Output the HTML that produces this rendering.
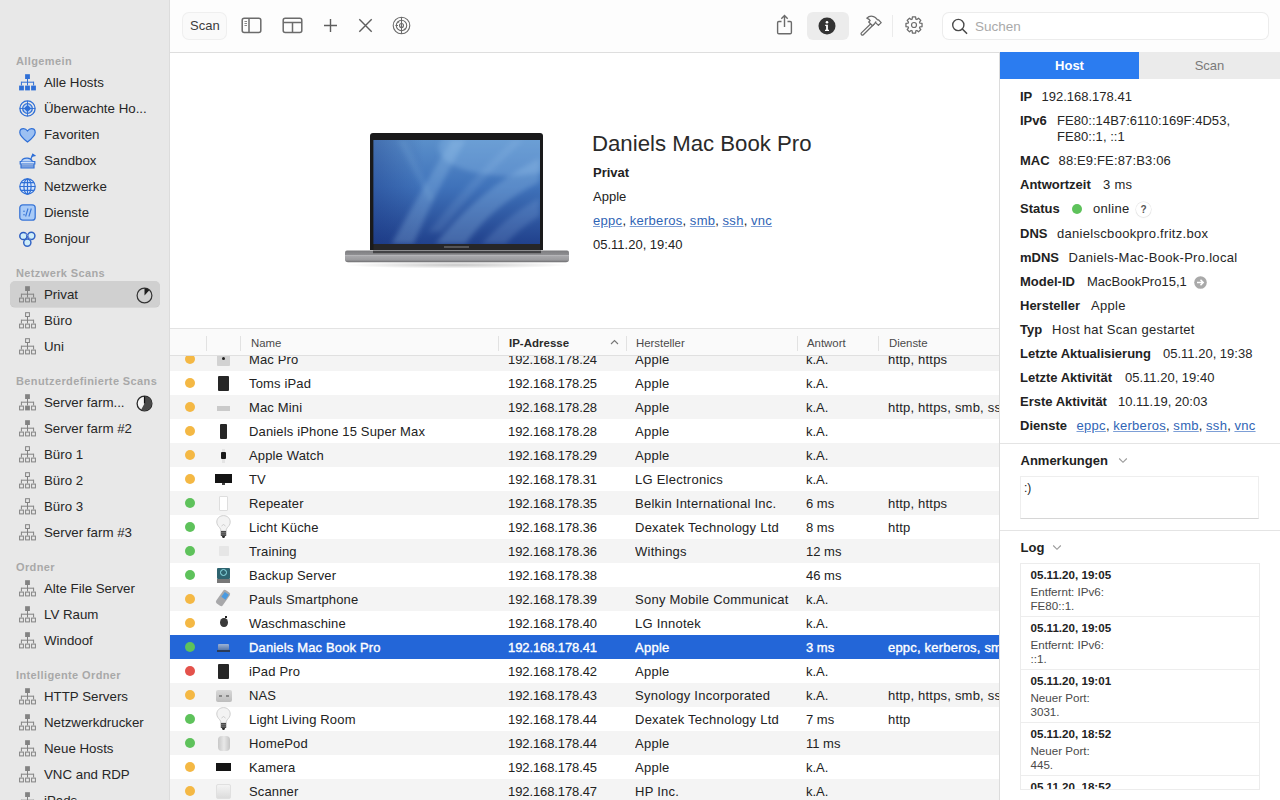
<!DOCTYPE html><html><head><meta charset="utf-8"><style>
*{margin:0;padding:0;box-sizing:border-box}
html,body{width:1280px;height:800px;overflow:hidden;background:#fff;font-family:"Liberation Sans",sans-serif;color:#222;font-size:13px}
.a{position:absolute;white-space:nowrap}
#sb{position:absolute;left:0;top:0;width:170px;height:800px;background:#e8e8e8;border-right:1px solid #dcdcdc;overflow:hidden}
.sh{position:absolute;left:16px;font-size:11px;font-weight:bold;color:#a8a8a8;line-height:14px;white-space:nowrap;letter-spacing:0.38px}
.si{position:absolute;left:10px;width:150px;height:26px;line-height:27px;white-space:nowrap;font-size:13.3px}
.si .t{position:absolute;left:34px;top:0;color:#262626}
.si .ic{position:absolute;left:9px;top:4px;width:17px;height:17px}
.si .pr{position:absolute;left:126px;top:5px}
.si.sel{background:#d0d0d0;border-radius:5px;height:25.5px;box-shadow:0 0.6px 0 #c8c8c8}
#tb{position:absolute;left:170px;top:0;width:1110px;height:53px;background:#fdfdfd;border-bottom:1px solid #dedede}
</style></head><body>
<div id="sb">
<div class="sh" style="top:54px">Allgemein</div>
<div class="si" style="top:69px"><div class="ic"><svg width="17" height="17" viewBox="0 0 17 17"><rect x="6.1" y="0.2" width="4.8" height="4.8" fill="#2f6fd6"/><path d="M8.5 5V11.4M2.4 8.2H14.6M2.4 7.7V11.4M14.6 7.7V11.4" stroke="#2f6fd6" stroke-width="1.0" fill="none"/><rect x="0.1" y="11.6" width="4.8" height="4.8" fill="#2f6fd6"/><rect x="6.1" y="11.6" width="4.8" height="4.8" fill="#2f6fd6"/><rect x="12.1" y="11.6" width="4.8" height="4.8" fill="#2f6fd6"/></svg></div><span class="t">Alle Hosts</span></div>
<div class="si" style="top:95px"><div class="ic"><svg width="17" height="17" viewBox="0 0 17 17"><g fill="none" stroke="#2f6fd6" stroke-width="1.3"><circle cx="8.5" cy="8.5" r="7.6"/><circle cx="8.5" cy="8.5" r="4.8" fill="#b9d3f7"/><path d="M8.5 0.9V16.1M0.9 8.5H16.1" stroke-width="0.9"/><path d="M8.5 5.8L11.2 8.5L8.5 11.2L5.8 8.5Z" fill="#2f6fd6"/></g></svg></div><span class="t">Überwachte Ho...</span></div>
<div class="si" style="top:121px"><div class="ic"><svg width="17" height="15" viewBox="0 0 17 15"><path d="M8.5 14C3 9.6 0.8 7.3 0.8 4.4C0.8 2.2 2.5 0.7 4.5 0.7C6.2 0.7 7.6 1.7 8.5 3C9.4 1.7 10.8 0.7 12.5 0.7C14.5 0.7 16.2 2.2 16.2 4.4C16.2 7.3 14 9.6 8.5 14Z" fill="#9cc0f2" stroke="#2f6fd6" stroke-width="1.2"/></svg></div><span class="t">Favoriten</span></div>
<div class="si" style="top:147px"><div class="ic"><svg width="17" height="16" viewBox="0 0 17 16"><g stroke="#2f6fd6" stroke-width="1.2" fill="none"><path d="M1.2 8.5H15.8V11H1.2Z" fill="#cfe0f9"/><path d="M2 11V14.8H15V11"/><path d="M2 13H15"/><path d="M2.5 8.5C3 6 5 5 8.5 5.2C11 5.3 12.5 6.5 13.5 8.5" fill="#b9d3f7"/><path d="M11.5 7L13.8 1.3"/><path d="M13.8 1.3L15.8 2.6L13.3 3.2Z" fill="#2f6fd6"/></g></svg></div><span class="t">Sandbox</span></div>
<div class="si" style="top:173px"><div class="ic"><svg width="17" height="17" viewBox="0 0 17 17"><g stroke="#2f6fd6" stroke-width="1.2" fill="#d6e5fb"><circle cx="8.5" cy="8.5" r="7.7"/><ellipse cx="8.5" cy="8.5" rx="3.6" ry="7.7" fill="none"/><path d="M8.5 0.8V16.2M0.8 8.5H16.2M2 4.6H15M2 12.4H15" fill="none"/></g></svg></div><span class="t">Netzwerke</span></div>
<div class="si" style="top:199px"><div class="ic"><svg width="17" height="17" viewBox="0 0 17 17"><rect x="0.8" y="0.8" width="15.4" height="15.4" rx="3" fill="#a9cbf7" stroke="#3a76d6" stroke-width="1.3"/><g fill="#3a76d6"><circle cx="5" cy="7.2" r="0.8"/><circle cx="5" cy="10.8" r="0.8"/></g><path d="M9 4.5L6.6 12.5M12.3 4.5L9.9 12.5" stroke="#3a76d6" stroke-width="1.1"/></svg></div><span class="t">Dienste</span></div>
<div class="si" style="top:225px"><div class="ic"><svg width="17" height="17" viewBox="0 0 17 17"><g fill="#cdeefb" opacity="0.9"><circle cx="4.4" cy="6" r="3.4"/><circle cx="12.3" cy="5.8" r="3.4"/><circle cx="8.3" cy="12.6" r="3.4"/></g><g fill="none" stroke-width="1.5"><circle cx="4.4" cy="6" r="3.6" stroke="#2a5cc0"/><circle cx="12.3" cy="5.8" r="3.6" stroke="#2f62c4"/><circle cx="8.3" cy="12.6" r="3.6" stroke="#3567c6"/></g><path d="M6.5 3.2Q9.5 6 11.2 9.8" stroke="#7d8fd8" stroke-width="1" fill="none"/></svg></div><span class="t">Bonjour</span></div>
<div class="sh" style="top:266px">Netzwerk Scans</div>
<div class="si sel" style="top:281px"><div class="ic"><svg width="17" height="17" viewBox="0 0 17 17"><rect x="6.1" y="0.2" width="4.8" height="4.8" fill="#828282"/><path d="M8.5 5V11.4M2.4 8.2H14.6M2.4 7.7V11.4M14.6 7.7V11.4" stroke="#828282" stroke-width="1.0" fill="none"/><rect x="0.6" y="12.1" width="3.8" height="3.8" fill="none" stroke="#828282" stroke-width="1.0"/><rect x="6.6" y="12.1" width="3.8" height="3.8" fill="none" stroke="#828282" stroke-width="1.0"/><rect x="12.6" y="12.1" width="3.8" height="3.8" fill="none" stroke="#828282" stroke-width="1.0"/></svg></div><span class="t">Privat</span><div class="pr"><svg width="17" height="17" viewBox="0 0 17 17"><circle cx="8.5" cy="8.5" r="7.4" fill="none" stroke="#333" stroke-width="1.2"/><path d="M8.5 8.5V1.2999999999999998A7.2 7.2 0 0 1 13.32 3.15Z" fill="#1e1e1e"/></svg></div></div>
<div class="si" style="top:307px"><div class="ic"><svg width="17" height="17" viewBox="0 0 17 17"><rect x="6.6" y="0.7" width="3.8" height="3.8" fill="none" stroke="#828282" stroke-width="1.0"/><path d="M8.5 5V11.4M2.4 8.2H14.6M2.4 7.7V11.4M14.6 7.7V11.4" stroke="#828282" stroke-width="1.0" fill="none"/><rect x="0.6" y="12.1" width="3.8" height="3.8" fill="none" stroke="#828282" stroke-width="1.0"/><rect x="6.6" y="12.1" width="3.8" height="3.8" fill="none" stroke="#828282" stroke-width="1.0"/><rect x="12.6" y="12.1" width="3.8" height="3.8" fill="none" stroke="#828282" stroke-width="1.0"/></svg></div><span class="t">Büro</span></div>
<div class="si" style="top:333px"><div class="ic"><svg width="17" height="17" viewBox="0 0 17 17"><rect x="6.6" y="0.7" width="3.8" height="3.8" fill="none" stroke="#828282" stroke-width="1.0"/><path d="M8.5 5V11.4M2.4 8.2H14.6M2.4 7.7V11.4M14.6 7.7V11.4" stroke="#828282" stroke-width="1.0" fill="none"/><rect x="0.6" y="12.1" width="3.8" height="3.8" fill="none" stroke="#828282" stroke-width="1.0"/><rect x="6.6" y="12.1" width="3.8" height="3.8" fill="none" stroke="#828282" stroke-width="1.0"/><rect x="12.6" y="12.1" width="3.8" height="3.8" fill="none" stroke="#828282" stroke-width="1.0"/></svg></div><span class="t">Uni</span></div>
<div class="sh" style="top:374px">Benutzerdefinierte Scans</div>
<div class="si" style="top:389px"><div class="ic"><svg width="17" height="17" viewBox="0 0 17 17"><rect x="6.1" y="0.2" width="4.8" height="4.8" fill="#828282"/><path d="M8.5 5V11.4M2.4 8.2H14.6M2.4 7.7V11.4M14.6 7.7V11.4" stroke="#828282" stroke-width="1.0" fill="none"/><rect x="0.6" y="12.1" width="3.8" height="3.8" fill="none" stroke="#828282" stroke-width="1.0"/><rect x="6.1" y="11.6" width="4.8" height="4.8" fill="#828282"/><rect x="12.6" y="12.1" width="3.8" height="3.8" fill="none" stroke="#828282" stroke-width="1.0"/></svg></div><span class="t">Server farm...</span><div class="pr"><svg width="17" height="17" viewBox="0 0 17 17"><circle cx="8.5" cy="8.5" r="7.4" fill="#f6f6f6" stroke="#2a2a2a" stroke-width="1.3"/><path d="M8.5 8.5V1.2999999999999998A7.2 7.2 0 1 1 5.12 14.86Z" fill="#4a4a4a"/><path d="M8.5 8.5V1.2" stroke="#111" stroke-width="1.2"/></svg></div></div>
<div class="si" style="top:415px"><div class="ic"><svg width="17" height="17" viewBox="0 0 17 17"><rect x="6.1" y="0.2" width="4.8" height="4.8" fill="#828282"/><path d="M8.5 5V11.4M2.4 8.2H14.6M2.4 7.7V11.4M14.6 7.7V11.4" stroke="#828282" stroke-width="1.0" fill="none"/><rect x="0.6" y="12.1" width="3.8" height="3.8" fill="none" stroke="#828282" stroke-width="1.0"/><rect x="6.6" y="12.1" width="3.8" height="3.8" fill="none" stroke="#828282" stroke-width="1.0"/><rect x="12.6" y="12.1" width="3.8" height="3.8" fill="none" stroke="#828282" stroke-width="1.0"/></svg></div><span class="t">Server farm #2</span></div>
<div class="si" style="top:441px"><div class="ic"><svg width="17" height="17" viewBox="0 0 17 17"><rect x="6.6" y="0.7" width="3.8" height="3.8" fill="none" stroke="#828282" stroke-width="1.0"/><path d="M8.5 5V11.4M2.4 8.2H14.6M2.4 7.7V11.4M14.6 7.7V11.4" stroke="#828282" stroke-width="1.0" fill="none"/><rect x="0.6" y="12.1" width="3.8" height="3.8" fill="none" stroke="#828282" stroke-width="1.0"/><rect x="6.6" y="12.1" width="3.8" height="3.8" fill="none" stroke="#828282" stroke-width="1.0"/><rect x="12.6" y="12.1" width="3.8" height="3.8" fill="none" stroke="#828282" stroke-width="1.0"/></svg></div><span class="t">Büro 1</span></div>
<div class="si" style="top:467px"><div class="ic"><svg width="17" height="17" viewBox="0 0 17 17"><rect x="6.6" y="0.7" width="3.8" height="3.8" fill="none" stroke="#828282" stroke-width="1.0"/><path d="M8.5 5V11.4M2.4 8.2H14.6M2.4 7.7V11.4M14.6 7.7V11.4" stroke="#828282" stroke-width="1.0" fill="none"/><rect x="0.6" y="12.1" width="3.8" height="3.8" fill="none" stroke="#828282" stroke-width="1.0"/><rect x="6.6" y="12.1" width="3.8" height="3.8" fill="none" stroke="#828282" stroke-width="1.0"/><rect x="12.6" y="12.1" width="3.8" height="3.8" fill="none" stroke="#828282" stroke-width="1.0"/></svg></div><span class="t">Büro 2</span></div>
<div class="si" style="top:493px"><div class="ic"><svg width="17" height="17" viewBox="0 0 17 17"><rect x="6.6" y="0.7" width="3.8" height="3.8" fill="none" stroke="#828282" stroke-width="1.0"/><path d="M8.5 5V11.4M2.4 8.2H14.6M2.4 7.7V11.4M14.6 7.7V11.4" stroke="#828282" stroke-width="1.0" fill="none"/><rect x="0.6" y="12.1" width="3.8" height="3.8" fill="none" stroke="#828282" stroke-width="1.0"/><rect x="6.6" y="12.1" width="3.8" height="3.8" fill="none" stroke="#828282" stroke-width="1.0"/><rect x="12.6" y="12.1" width="3.8" height="3.8" fill="none" stroke="#828282" stroke-width="1.0"/></svg></div><span class="t">Büro 3</span></div>
<div class="si" style="top:519px"><div class="ic"><svg width="17" height="17" viewBox="0 0 17 17"><rect x="6.6" y="0.7" width="3.8" height="3.8" fill="none" stroke="#828282" stroke-width="1.0"/><path d="M8.5 5V11.4M2.4 8.2H14.6M2.4 7.7V11.4M14.6 7.7V11.4" stroke="#828282" stroke-width="1.0" fill="none"/><rect x="0.6" y="12.1" width="3.8" height="3.8" fill="none" stroke="#828282" stroke-width="1.0"/><rect x="6.6" y="12.1" width="3.8" height="3.8" fill="none" stroke="#828282" stroke-width="1.0"/><rect x="12.6" y="12.1" width="3.8" height="3.8" fill="none" stroke="#828282" stroke-width="1.0"/></svg></div><span class="t">Server farm #3</span></div>
<div class="sh" style="top:560px">Ordner</div>
<div class="si" style="top:575px"><div class="ic"><svg width="17" height="17" viewBox="0 0 17 17"><rect x="6.1" y="0.2" width="4.8" height="4.8" fill="#828282"/><path d="M8.5 5V11.4M2.4 8.2H14.6M2.4 7.7V11.4M14.6 7.7V11.4" stroke="#828282" stroke-width="1.0" fill="none"/><rect x="0.6" y="12.1" width="3.8" height="3.8" fill="none" stroke="#828282" stroke-width="1.0"/><rect x="6.6" y="12.1" width="3.8" height="3.8" fill="none" stroke="#828282" stroke-width="1.0"/><rect x="12.6" y="12.1" width="3.8" height="3.8" fill="none" stroke="#828282" stroke-width="1.0"/></svg></div><span class="t">Alte File Server</span></div>
<div class="si" style="top:601px"><div class="ic"><svg width="17" height="17" viewBox="0 0 17 17"><rect x="6.1" y="0.2" width="4.8" height="4.8" fill="#828282"/><path d="M8.5 5V11.4M2.4 8.2H14.6M2.4 7.7V11.4M14.6 7.7V11.4" stroke="#828282" stroke-width="1.0" fill="none"/><rect x="0.6" y="12.1" width="3.8" height="3.8" fill="none" stroke="#828282" stroke-width="1.0"/><rect x="6.6" y="12.1" width="3.8" height="3.8" fill="none" stroke="#828282" stroke-width="1.0"/><rect x="12.6" y="12.1" width="3.8" height="3.8" fill="none" stroke="#828282" stroke-width="1.0"/></svg></div><span class="t">LV Raum</span></div>
<div class="si" style="top:627px"><div class="ic"><svg width="17" height="17" viewBox="0 0 17 17"><rect x="6.1" y="0.2" width="4.8" height="4.8" fill="#828282"/><path d="M8.5 5V11.4M2.4 8.2H14.6M2.4 7.7V11.4M14.6 7.7V11.4" stroke="#828282" stroke-width="1.0" fill="none"/><rect x="0.6" y="12.1" width="3.8" height="3.8" fill="none" stroke="#828282" stroke-width="1.0"/><rect x="6.6" y="12.1" width="3.8" height="3.8" fill="none" stroke="#828282" stroke-width="1.0"/><rect x="12.6" y="12.1" width="3.8" height="3.8" fill="none" stroke="#828282" stroke-width="1.0"/></svg></div><span class="t">Windoof</span></div>
<div class="sh" style="top:668px">Intelligente Ordner</div>
<div class="si" style="top:683px"><div class="ic"><svg width="17" height="17" viewBox="0 0 17 17"><rect x="6.1" y="0.2" width="4.8" height="4.8" fill="#828282"/><path d="M8.5 5V11.4M2.4 8.2H14.6M2.4 7.7V11.4M14.6 7.7V11.4" stroke="#828282" stroke-width="1.0" fill="none"/><rect x="0.6" y="12.1" width="3.8" height="3.8" fill="none" stroke="#828282" stroke-width="1.0"/><rect x="6.6" y="12.1" width="3.8" height="3.8" fill="none" stroke="#828282" stroke-width="1.0"/><rect x="12.6" y="12.1" width="3.8" height="3.8" fill="none" stroke="#828282" stroke-width="1.0"/></svg></div><span class="t">HTTP Servers</span></div>
<div class="si" style="top:709px"><div class="ic"><svg width="17" height="17" viewBox="0 0 17 17"><rect x="6.1" y="0.2" width="4.8" height="4.8" fill="#828282"/><path d="M8.5 5V11.4M2.4 8.2H14.6M2.4 7.7V11.4M14.6 7.7V11.4" stroke="#828282" stroke-width="1.0" fill="none"/><rect x="0.6" y="12.1" width="3.8" height="3.8" fill="none" stroke="#828282" stroke-width="1.0"/><rect x="6.6" y="12.1" width="3.8" height="3.8" fill="none" stroke="#828282" stroke-width="1.0"/><rect x="12.6" y="12.1" width="3.8" height="3.8" fill="none" stroke="#828282" stroke-width="1.0"/></svg></div><span class="t">Netzwerkdrucker</span></div>
<div class="si" style="top:735px"><div class="ic"><svg width="17" height="17" viewBox="0 0 17 17"><rect x="6.1" y="0.2" width="4.8" height="4.8" fill="#828282"/><path d="M8.5 5V11.4M2.4 8.2H14.6M2.4 7.7V11.4M14.6 7.7V11.4" stroke="#828282" stroke-width="1.0" fill="none"/><rect x="0.6" y="12.1" width="3.8" height="3.8" fill="none" stroke="#828282" stroke-width="1.0"/><rect x="6.6" y="12.1" width="3.8" height="3.8" fill="none" stroke="#828282" stroke-width="1.0"/><rect x="12.6" y="12.1" width="3.8" height="3.8" fill="none" stroke="#828282" stroke-width="1.0"/></svg></div><span class="t">Neue Hosts</span></div>
<div class="si" style="top:761px"><div class="ic"><svg width="17" height="17" viewBox="0 0 17 17"><rect x="6.1" y="0.2" width="4.8" height="4.8" fill="#828282"/><path d="M8.5 5V11.4M2.4 8.2H14.6M2.4 7.7V11.4M14.6 7.7V11.4" stroke="#828282" stroke-width="1.0" fill="none"/><rect x="0.6" y="12.1" width="3.8" height="3.8" fill="none" stroke="#828282" stroke-width="1.0"/><rect x="6.6" y="12.1" width="3.8" height="3.8" fill="none" stroke="#828282" stroke-width="1.0"/><rect x="12.6" y="12.1" width="3.8" height="3.8" fill="none" stroke="#828282" stroke-width="1.0"/></svg></div><span class="t">VNC and RDP</span></div>
<div class="si" style="top:787px"><div class="ic"><svg width="17" height="17" viewBox="0 0 17 17"><rect x="6.1" y="0.2" width="4.8" height="4.8" fill="#828282"/><path d="M8.5 5V11.4M2.4 8.2H14.6M2.4 7.7V11.4M14.6 7.7V11.4" stroke="#828282" stroke-width="1.0" fill="none"/><rect x="0.6" y="12.1" width="3.8" height="3.8" fill="none" stroke="#828282" stroke-width="1.0"/><rect x="6.6" y="12.1" width="3.8" height="3.8" fill="none" stroke="#828282" stroke-width="1.0"/><rect x="12.6" y="12.1" width="3.8" height="3.8" fill="none" stroke="#828282" stroke-width="1.0"/></svg></div><span class="t">iPads</span></div>
</div>
<div id="tb">
</div>
<div class="a" style="left:183px;top:13px;width:43px;height:26px;border-radius:6px;background:#fafafa;box-shadow:0 0 0 1px #efefef;"></div>
<div class="a" style="left:190px;top:13px;line-height:26px;font-size:13px;color:#3c3c3c">Scan</div>
<svg class="a" style="left:241px;top:17px" width="21" height="17" viewBox="0 0 21 17"><rect x="1.2" y="1.2" width="18.6" height="14.2" rx="2" fill="none" stroke="#6b6b6b" stroke-width="1.5"/><path d="M8 1.2V15.4" stroke="#6b6b6b" stroke-width="1.5"/><path d="M3.5 4.5H6M3.5 6.5H6M3.5 8.5H6" stroke="#6b6b6b" stroke-width="0.8"/></svg>
<svg class="a" style="left:282px;top:17px" width="21" height="17" viewBox="0 0 21 17"><rect x="1.2" y="1.2" width="18.6" height="14.2" rx="2" fill="none" stroke="#6b6b6b" stroke-width="1.5"/><path d="M1.2 5.5H19.8M10.5 5.5V15.4" stroke="#6b6b6b" stroke-width="1.5"/></svg>
<svg class="a" style="left:323px;top:18px" width="15" height="15" viewBox="0 0 15 15"><path d="M7.5 1V14M1 7.5H14" stroke="#5e5e5e" stroke-width="1.4"/></svg>
<svg class="a" style="left:358px;top:18px" width="15" height="15" viewBox="0 0 15 15"><path d="M1.3 1.3L13.7 13.7M13.7 1.3L1.3 13.7" stroke="#5e5e5e" stroke-width="1.4"/></svg>
<svg class="a" style="left:392px;top:16px" width="19" height="19" viewBox="0 0 19 19"><g fill="none" stroke="#6b6b6b" stroke-width="1.1"><circle cx="9.5" cy="9.5" r="8.3"/><circle cx="9.5" cy="9.5" r="5.2"/><circle cx="9.5" cy="9.5" r="2"/><path d="M9.5 1V18M3.5 9.5H6"/></g><circle cx="6.5" cy="5.8" r="0.9" fill="#6b6b6b"/><circle cx="12.6" cy="13.3" r="0.9" fill="#6b6b6b"/></svg>
<svg class="a" style="left:776px;top:14px" width="17" height="21" viewBox="0 0 17 21"><path d="M5.5 7.5H2.8Q1.6 7.5 1.6 8.7V18.6Q1.6 19.8 2.8 19.8H14.2Q15.4 19.8 15.4 18.6V8.7Q15.4 7.5 14.2 7.5H11.5" fill="none" stroke="#6b6b6b" stroke-width="1.4"/><path d="M8.5 13V1.8M5.3 4.8L8.5 1.6L11.7 4.8" fill="none" stroke="#6b6b6b" stroke-width="1.4"/></svg>
<div class="a" style="left:807px;top:12px;width:42px;height:28px;border-radius:6px;background:#ececec"></div>
<svg class="a" style="left:818px;top:17px" width="18" height="18" viewBox="0 0 18 18"><circle cx="9" cy="9" r="8.5" fill="#333"/><circle cx="9" cy="5.3" r="1.3" fill="#fff"/><path d="M7.2 7.8H9.9V12.8H11V13.9H7V12.8H8.1V8.9H7.2Z" fill="#fff"/></svg>
<svg class="a" style="left:859px;top:14px" width="24" height="22" viewBox="0 0 24 22"><g fill="#fdfdfd" stroke="#6b6b6b" stroke-width="1.25" stroke-linejoin="round"><path d="M13.6 8L2.4 18.9Q1.6 19.8 2.4 20.6L2.6 20.8Q3.4 21.6 4.3 20.7L15.4 9.8Z"/><path d="M11.2 6.6Q10 5 7.8 4.2Q10.8 1.2 14.6 2.6Q16.4 3.3 17.8 5L18.6 5.9L19.4 5.8L22.2 8.6L19.4 11.4L16.6 8.6L16.8 7.8L15.8 9.4L13.5 11.7L9.7 8Z"/></g></svg>
<div class="a" style="left:892px;top:15px;width:1px;height:22px;background:#ebebeb"></div>
<svg class="a" style="left:904.5px;top:16px" width="18" height="18" viewBox="0 0 18 18"><path d="M7.17 3.08 L7.37 0.96 L10.63 0.96 L10.83 3.08 L11.89 3.52 L13.53 2.17 L15.83 4.47 L14.48 6.11 L14.92 7.17 L17.04 7.37 L17.04 10.63 L14.92 10.83 L14.48 11.89 L15.83 13.53 L13.53 15.83 L11.89 14.48 L10.83 14.92 L10.63 17.04 L7.37 17.04 L7.17 14.92 L6.11 14.48 L4.47 15.83 L2.17 13.53 L3.52 11.89 L3.08 10.83 L0.96 10.63 L0.96 7.37 L3.08 7.17 L3.52 6.11 L2.17 4.47 L4.47 2.17 L6.11 3.52Z" fill="none" stroke="#6b6b6b" stroke-width="1.25" stroke-linejoin="round"/><circle cx="9" cy="9" r="2.5" fill="none" stroke="#6b6b6b" stroke-width="1.2"/></svg>
<div class="a" style="left:943px;top:13px;width:325px;height:26px;border-radius:6px;background:#fff;box-shadow:0 0 0 1px #ececec"></div>
<svg class="a" style="left:951px;top:18px" width="18" height="17" viewBox="0 0 18 17"><circle cx="7.3" cy="7" r="5.6" fill="none" stroke="#4a4a4a" stroke-width="1.4"/><path d="M11.3 11L15.6 15.3" stroke="#4a4a4a" stroke-width="1.6" stroke-linecap="round"/></svg>
<div class="a" style="left:975px;top:13px;line-height:27px;font-size:13.5px;color:#a9a9a9">Suchen</div>
<svg class="a" style="left:340px;top:128px" width="235" height="145" viewBox="0 0 235 145"><defs><linearGradient id="scr" x1="0" y1="0" x2="0" y2="1"><stop offset="0" stop-color="#5a8fca"/><stop offset="0.45" stop-color="#3f72ba"/><stop offset="1" stop-color="#21418c"/></linearGradient><linearGradient id="scl" x1="0" y1="0" x2="1" y2="0"><stop offset="0" stop-color="#17327e" stop-opacity="0.35"/><stop offset="0.3" stop-color="#17327e" stop-opacity="0"/></linearGradient><filter id="bl2" x="-20%" y="-20%" width="140%" height="140%"><feGaussianBlur stdDeviation="2.6"/></filter><linearGradient id="base" x1="0" y1="0" x2="0" y2="1"><stop offset="0" stop-color="#7a7a7d"/><stop offset="0.35" stop-color="#8e8e91"/><stop offset="0.45" stop-color="#a9a9ac"/><stop offset="0.8" stop-color="#9a9a9d"/><stop offset="1" stop-color="#6a6a6d"/></linearGradient><filter id="bl" x="-20%" y="-20%" width="140%" height="140%"><feGaussianBlur stdDeviation="2.5"/></filter><clipPath id="sc"><rect x="33.5" y="12" width="166.5" height="104"/></clipPath><radialGradient id="shd" cx="0.5" cy="0.5" r="0.5"><stop offset="0" stop-color="#000" stop-opacity="0.22"/><stop offset="1" stop-color="#000" stop-opacity="0"/></radialGradient></defs><ellipse cx="117" cy="137" rx="112" ry="3.5" fill="url(#shd)"/><path d="M30 122V8Q30 5 33 5H200Q203 5 203 8V122Z" fill="#1a1a1b"/><rect x="33.5" y="12" width="166.5" height="104" fill="url(#scr)"/><rect x="33.5" y="12" width="166.5" height="104" fill="url(#scl)"/><g clip-path="url(#sc)"><g transform="translate(33.5 12)"><g filter="url(#bl2)"><ellipse cx="135" cy="8" rx="70" ry="28" fill="#8dbbe8" opacity="0.35"/><path d="M18 104Q45 55 78 0H92Q62 52 40 104Z" fill="#a6cff2" opacity="0.26"/><path d="M24 0L56 62L60 58L32 0Z" fill="#a6cff2" opacity="0.13"/><path d="M62 104Q105 50 166 18V42Q118 66 92 104Z" fill="#a6cff2" opacity="0.26"/><path d="M55 92Q95 40 140 0H150Q105 42 68 92Z" fill="#b4d8f5" opacity="0.13"/><path d="M108 104Q138 72 166 58V76Q146 88 132 104Z" fill="#a6cff2" opacity="0.18"/></g></g></g><rect x="33.5" y="116" width="166.5" height="6" fill="#262628"/><rect x="104" y="118.3" width="25" height="1.4" fill="#6a6a6c"/><path d="M7 122.4H227Q229 122.4 229 124.8V131.5Q229 134.3 226 134.3H8Q5 134.3 5 131.5V124.8Q5 122.4 7 122.4Z" fill="url(#base)"/><rect x="33" y="122.6" width="168" height="2.6" fill="#3c3c3e" opacity="0.9"/><rect x="5" y="127.2" width="224" height="0.8" fill="#c4c4c6" opacity="0.7"/></svg>
<div class="a" style="left:592px;top:129.5px;font-size:22.2px;line-height:28px;color:#2a2a2a">Daniels Mac Book Pro</div>
<div class="a" style="left:593px;top:161px;font-size:13px;line-height:24px;font-weight:bold;color:#222">Privat</div>
<div class="a" style="left:593px;top:185px;font-size:13px;line-height:24px;color:#222">Apple</div>
<div class="a" style="left:593px;top:209px;font-size:13px;line-height:24px;color:#222"><span style="color:#2f64b5;text-decoration:underline;text-decoration-color:#7d9fd6;letter-spacing:0.3px">eppc</span>, <span style="color:#2f64b5;text-decoration:underline;text-decoration-color:#7d9fd6;letter-spacing:0.3px">kerberos</span>, <span style="color:#2f64b5;text-decoration:underline;text-decoration-color:#7d9fd6;letter-spacing:0.3px">smb</span>, <span style="color:#2f64b5;text-decoration:underline;text-decoration-color:#7d9fd6;letter-spacing:0.3px">ssh</span>, <span style="color:#2f64b5;text-decoration:underline;text-decoration-color:#7d9fd6;letter-spacing:0.3px">vnc</span></div>
<div class="a" style="left:593px;top:233px;font-size:13px;line-height:24px;color:#222">05.11.20, 19:40</div>
<div class="a" style="left:170px;top:328px;width:829px;height:1px;background:#e3e3e3"></div>
<div id="tbl" class="a" style="left:170px;top:329px;width:829px;height:471px;overflow:hidden">
<div class="a" style="left:0;top:18px;width:829px;height:24px;background:#f4f4f4;color:#222;font-size:13px;line-height:24px;">
<div class="a" style="left:15px;top:7px;width:10px;height:10px;border-radius:50%;background:#f4b844"></div>
<div class="a" style="left:-170px;top:0;width:0;height:24px"><div class="a" style="left:217px;top:7px;width:13px;height:12px;background:#d2d2d2;border-radius:1px"><div class="a" style="left:5px;top:3px;width:3px;height:3px;background:#222;border-radius:50%"></div></div></div>
<div class="a" style="left:79px;top:1px;letter-spacing:0.15px">Mac Pro</div>
<div class="a" style="left:338px;top:1px;letter-spacing:-0.1px">192.168.178.24</div>
<div class="a" style="left:465px;top:1px;width:156px;overflow:hidden;letter-spacing:0.25px">Apple</div>
<div class="a" style="left:636px;top:1px">k.A.</div>
<div class="a" style="left:718px;top:1px;width:111px;overflow:hidden;letter-spacing:0.2px">http, https</div>
</div>
<div class="a" style="left:0;top:42px;width:829px;height:24px;background:#fff;color:#222;font-size:13px;line-height:24px;">
<div class="a" style="left:15px;top:7px;width:10px;height:10px;border-radius:50%;background:#f4b844"></div>
<div class="a" style="left:-170px;top:0;width:0;height:24px"><div class="a" style="left:217.5px;top:4.5px;width:11.5px;height:15px;background:#262626;border-radius:1px"></div></div>
<div class="a" style="left:79px;top:1px;letter-spacing:0.15px">Toms iPad</div>
<div class="a" style="left:338px;top:1px;letter-spacing:-0.1px">192.168.178.25</div>
<div class="a" style="left:465px;top:1px;width:156px;overflow:hidden;letter-spacing:0.25px">Apple</div>
<div class="a" style="left:636px;top:1px">k.A.</div>
<div class="a" style="left:718px;top:1px;width:111px;overflow:hidden;letter-spacing:0.2px"></div>
</div>
<div class="a" style="left:0;top:66px;width:829px;height:24px;background:#f4f4f4;color:#222;font-size:13px;line-height:24px;">
<div class="a" style="left:15px;top:7px;width:10px;height:10px;border-radius:50%;background:#f4b844"></div>
<div class="a" style="left:-170px;top:0;width:0;height:24px"><div class="a" style="left:217px;top:10.5px;width:13px;height:5px;background:#cacaca"></div></div>
<div class="a" style="left:79px;top:1px;letter-spacing:0.15px">Mac Mini</div>
<div class="a" style="left:338px;top:1px;letter-spacing:-0.1px">192.168.178.28</div>
<div class="a" style="left:465px;top:1px;width:156px;overflow:hidden;letter-spacing:0.25px">Apple</div>
<div class="a" style="left:636px;top:1px">k.A.</div>
<div class="a" style="left:718px;top:1px;width:111px;overflow:hidden;letter-spacing:0.2px">http, https, smb, ssh</div>
</div>
<div class="a" style="left:0;top:90px;width:829px;height:24px;background:#fff;color:#222;font-size:13px;line-height:24px;">
<div class="a" style="left:15px;top:7px;width:10px;height:10px;border-radius:50%;background:#f4b844"></div>
<div class="a" style="left:-170px;top:0;width:0;height:24px"><div class="a" style="left:219.5px;top:4.5px;width:7.5px;height:15px;background:#262626;border-radius:1px"></div></div>
<div class="a" style="left:79px;top:1px;letter-spacing:0.15px">Daniels iPhone 15 Super Max</div>
<div class="a" style="left:338px;top:1px;letter-spacing:-0.1px">192.168.178.28</div>
<div class="a" style="left:465px;top:1px;width:156px;overflow:hidden;letter-spacing:0.25px">Apple</div>
<div class="a" style="left:636px;top:1px">k.A.</div>
<div class="a" style="left:718px;top:1px;width:111px;overflow:hidden;letter-spacing:0.2px"></div>
</div>
<div class="a" style="left:0;top:114px;width:829px;height:24px;background:#f4f4f4;color:#222;font-size:13px;line-height:24px;">
<div class="a" style="left:15px;top:7px;width:10px;height:10px;border-radius:50%;background:#f4b844"></div>
<div class="a" style="left:-170px;top:0;width:0;height:24px"><div class="a" style="left:222px;top:6px;width:3px;height:14px;background:#e4e4e4"></div><div class="a" style="left:220.5px;top:9px;width:5.5px;height:6.5px;background:#1a1a1a;border-radius:1px"></div></div>
<div class="a" style="left:79px;top:1px;letter-spacing:0.15px">Apple Watch</div>
<div class="a" style="left:338px;top:1px;letter-spacing:-0.1px">192.168.178.29</div>
<div class="a" style="left:465px;top:1px;width:156px;overflow:hidden;letter-spacing:0.25px">Apple</div>
<div class="a" style="left:636px;top:1px">k.A.</div>
<div class="a" style="left:718px;top:1px;width:111px;overflow:hidden;letter-spacing:0.2px"></div>
</div>
<div class="a" style="left:0;top:138px;width:829px;height:24px;background:#fff;color:#222;font-size:13px;line-height:24px;">
<div class="a" style="left:15px;top:7px;width:10px;height:10px;border-radius:50%;background:#f4b844"></div>
<div class="a" style="left:-170px;top:0;width:0;height:24px"><div class="a" style="left:215px;top:6.5px;width:17px;height:9.5px;background:#141414"></div><div class="a" style="left:222px;top:16px;width:3px;height:2px;background:#444"></div></div>
<div class="a" style="left:79px;top:1px;letter-spacing:0.15px">TV</div>
<div class="a" style="left:338px;top:1px;letter-spacing:-0.1px">192.168.178.31</div>
<div class="a" style="left:465px;top:1px;width:156px;overflow:hidden;letter-spacing:0.25px">LG Electronics</div>
<div class="a" style="left:636px;top:1px">k.A.</div>
<div class="a" style="left:718px;top:1px;width:111px;overflow:hidden;letter-spacing:0.2px"></div>
</div>
<div class="a" style="left:0;top:162px;width:829px;height:24px;background:#f4f4f4;color:#222;font-size:13px;line-height:24px;">
<div class="a" style="left:15px;top:7px;width:10px;height:10px;border-radius:50%;background:#5ec25b"></div>
<div class="a" style="left:-170px;top:0;width:0;height:24px"><div class="a" style="left:219px;top:4.5px;width:8.5px;height:15px;background:#fff;border:1px solid #dedede;border-radius:1px"></div></div>
<div class="a" style="left:79px;top:1px;letter-spacing:0.15px">Repeater</div>
<div class="a" style="left:338px;top:1px;letter-spacing:-0.1px">192.168.178.35</div>
<div class="a" style="left:465px;top:1px;width:156px;overflow:hidden;letter-spacing:0.25px">Belkin International Inc.</div>
<div class="a" style="left:636px;top:1px">6 ms</div>
<div class="a" style="left:718px;top:1px;width:111px;overflow:hidden;letter-spacing:0.2px">http, https</div>
</div>
<div class="a" style="left:0;top:186px;width:829px;height:24px;background:#fff;color:#222;font-size:13px;line-height:24px;">
<div class="a" style="left:15px;top:7px;width:10px;height:10px;border-radius:50%;background:#5ec25b"></div>
<div class="a" style="left:-170px;top:0;width:0;height:24px"><svg class="a" style="left:216px;top:0px" width="15" height="24" viewBox="0 0 15 24"><path d="M7.5 0.6C3.6 0.6 0.8 3.4 0.8 7C0.8 9.6 2.4 11.3 3.8 12.8C4.6 13.7 4.8 14.6 4.8 16H10.2C10.2 14.6 10.4 13.7 11.2 12.8C12.6 11.3 14.2 9.6 14.2 7C14.2 3.4 11.4 0.6 7.5 0.6Z" fill="#f3f3f3" stroke="#c9c9c9" stroke-width="0.9"/><path d="M5.5 11Q7.5 8 9.5 11" stroke="#bdbdbd" stroke-width="0.7" fill="none"/><rect x="4.8" y="16" width="5.4" height="5" fill="#4a4a4a"/><path d="M4.8 17.5H10.2M4.8 19.2H10.2" stroke="#888" stroke-width="0.6"/><path d="M5.8 21H9.2L8.3 23H6.7Z" fill="#2a2a2a"/></svg></div>
<div class="a" style="left:79px;top:1px;letter-spacing:0.15px">Licht Küche</div>
<div class="a" style="left:338px;top:1px;letter-spacing:-0.1px">192.168.178.36</div>
<div class="a" style="left:465px;top:1px;width:156px;overflow:hidden;letter-spacing:0.25px">Dexatek Technology Ltd</div>
<div class="a" style="left:636px;top:1px">8 ms</div>
<div class="a" style="left:718px;top:1px;width:111px;overflow:hidden;letter-spacing:0.2px">http</div>
</div>
<div class="a" style="left:0;top:210px;width:829px;height:24px;background:#f4f4f4;color:#222;font-size:13px;line-height:24px;">
<div class="a" style="left:15px;top:7px;width:10px;height:10px;border-radius:50%;background:#5ec25b"></div>
<div class="a" style="left:-170px;top:0;width:0;height:24px"><div class="a" style="left:218.5px;top:7px;width:10.5px;height:10px;background:#e6e6e6;border-radius:1px"></div></div>
<div class="a" style="left:79px;top:1px;letter-spacing:0.15px">Training</div>
<div class="a" style="left:338px;top:1px;letter-spacing:-0.1px">192.168.178.36</div>
<div class="a" style="left:465px;top:1px;width:156px;overflow:hidden;letter-spacing:0.25px">Withings</div>
<div class="a" style="left:636px;top:1px">12 ms</div>
<div class="a" style="left:718px;top:1px;width:111px;overflow:hidden;letter-spacing:0.2px"></div>
</div>
<div class="a" style="left:0;top:234px;width:829px;height:24px;background:#fff;color:#222;font-size:13px;line-height:24px;">
<div class="a" style="left:15px;top:7px;width:10px;height:10px;border-radius:50%;background:#5ec25b"></div>
<div class="a" style="left:-170px;top:0;width:0;height:24px"><div class="a" style="left:217px;top:4.5px;width:13px;height:11px;background:#2f6470;border-radius:1px"><div class="a" style="left:3px;top:1.5px;width:7px;height:7px;border:1.5px solid #8fe0e8;border-radius:50%"></div></div><div class="a" style="left:217px;top:15.5px;width:13px;height:4px;background:#777"></div></div>
<div class="a" style="left:79px;top:1px;letter-spacing:0.15px">Backup Server</div>
<div class="a" style="left:338px;top:1px;letter-spacing:-0.1px">192.168.178.38</div>
<div class="a" style="left:465px;top:1px;width:156px;overflow:hidden;letter-spacing:0.25px"></div>
<div class="a" style="left:636px;top:1px">46 ms</div>
<div class="a" style="left:718px;top:1px;width:111px;overflow:hidden;letter-spacing:0.2px"></div>
</div>
<div class="a" style="left:0;top:258px;width:829px;height:24px;background:#f4f4f4;color:#222;font-size:13px;line-height:24px;">
<div class="a" style="left:15px;top:7px;width:10px;height:10px;border-radius:50%;background:#f4b844"></div>
<div class="a" style="left:-170px;top:0;width:0;height:24px"><div class="a" style="left:219px;top:3px;width:8px;height:16px;background:#a8a8aa;border-radius:2px;transform:rotate(35deg)"><div class="a" style="left:1.5px;top:2px;width:5px;height:6px;background:#4a9ae0"></div></div></div>
<div class="a" style="left:79px;top:1px;letter-spacing:0.15px">Pauls Smartphone</div>
<div class="a" style="left:338px;top:1px;letter-spacing:-0.1px">192.168.178.39</div>
<div class="a" style="left:465px;top:1px;width:156px;overflow:hidden;letter-spacing:0.25px">Sony Mobile Communicat</div>
<div class="a" style="left:636px;top:1px">k.A.</div>
<div class="a" style="left:718px;top:1px;width:111px;overflow:hidden;letter-spacing:0.2px"></div>
</div>
<div class="a" style="left:0;top:282px;width:829px;height:24px;background:#fff;color:#222;font-size:13px;line-height:24px;">
<div class="a" style="left:15px;top:7px;width:10px;height:10px;border-radius:50%;background:#f4b844"></div>
<div class="a" style="left:-170px;top:0;width:0;height:24px"><div class="a" style="left:220px;top:7px;width:7.5px;height:9px;background:#3a3a3a;border-radius:50%"></div><div class="a" style="left:225px;top:5px;width:2px;height:2px;background:#222"></div></div>
<div class="a" style="left:79px;top:1px;letter-spacing:0.15px">Waschmaschine</div>
<div class="a" style="left:338px;top:1px;letter-spacing:-0.1px">192.168.178.40</div>
<div class="a" style="left:465px;top:1px;width:156px;overflow:hidden;letter-spacing:0.25px">LG Innotek</div>
<div class="a" style="left:636px;top:1px">k.A.</div>
<div class="a" style="left:718px;top:1px;width:111px;overflow:hidden;letter-spacing:0.2px"></div>
</div>
<div class="a" style="left:0;top:306px;width:829px;height:24px;background:#2366d8;color:#fff;font-size:13px;line-height:24px;-webkit-text-stroke:0.35px #fff;">
<div class="a" style="left:15px;top:7px;width:10px;height:10px;border-radius:50%;background:#5ec25b"></div>
<div class="a" style="left:-170px;top:0;width:0;height:24px"><div class="a" style="left:218px;top:8.5px;width:11px;height:6px;background:linear-gradient(#9db3d6,#5877a8);border-radius:1px"></div><div class="a" style="left:217px;top:14.5px;width:13px;height:2px;background:#2b3b58"></div></div>
<div class="a" style="left:79px;top:1px;letter-spacing:0.15px">Daniels Mac Book Pro</div>
<div class="a" style="left:338px;top:1px;letter-spacing:-0.1px">192.168.178.41</div>
<div class="a" style="left:465px;top:1px;width:156px;overflow:hidden;letter-spacing:0.25px">Apple</div>
<div class="a" style="left:636px;top:1px">3 ms</div>
<div class="a" style="left:718px;top:1px;width:111px;overflow:hidden;letter-spacing:0.2px">eppc, kerberos, smb, ssh, vnc</div>
</div>
<div class="a" style="left:0;top:330px;width:829px;height:24px;background:#fff;color:#222;font-size:13px;line-height:24px;">
<div class="a" style="left:15px;top:7px;width:10px;height:10px;border-radius:50%;background:#e4524b"></div>
<div class="a" style="left:-170px;top:0;width:0;height:24px"><div class="a" style="left:217.5px;top:4.5px;width:11.5px;height:15px;background:#262626;border-radius:1px"></div></div>
<div class="a" style="left:79px;top:1px;letter-spacing:0.15px">iPad Pro</div>
<div class="a" style="left:338px;top:1px;letter-spacing:-0.1px">192.168.178.42</div>
<div class="a" style="left:465px;top:1px;width:156px;overflow:hidden;letter-spacing:0.25px">Apple</div>
<div class="a" style="left:636px;top:1px">k.A.</div>
<div class="a" style="left:718px;top:1px;width:111px;overflow:hidden;letter-spacing:0.2px"></div>
</div>
<div class="a" style="left:0;top:354px;width:829px;height:24px;background:#f4f4f4;color:#222;font-size:13px;line-height:24px;">
<div class="a" style="left:15px;top:7px;width:10px;height:10px;border-radius:50%;background:#f4b844"></div>
<div class="a" style="left:-170px;top:0;width:0;height:24px"><div class="a" style="left:216px;top:7px;width:16px;height:12px;background:linear-gradient(#d8d8d8,#bdbdbd);border-radius:2px"><div class="a" style="left:3px;top:5px;width:3px;height:2px;background:#888"></div><div class="a" style="left:10px;top:5px;width:3px;height:2px;background:#888"></div></div></div>
<div class="a" style="left:79px;top:1px;letter-spacing:0.15px">NAS</div>
<div class="a" style="left:338px;top:1px;letter-spacing:-0.1px">192.168.178.43</div>
<div class="a" style="left:465px;top:1px;width:156px;overflow:hidden;letter-spacing:0.25px">Synology Incorporated</div>
<div class="a" style="left:636px;top:1px">k.A.</div>
<div class="a" style="left:718px;top:1px;width:111px;overflow:hidden;letter-spacing:0.2px">http, https, smb, ssh</div>
</div>
<div class="a" style="left:0;top:378px;width:829px;height:24px;background:#fff;color:#222;font-size:13px;line-height:24px;">
<div class="a" style="left:15px;top:7px;width:10px;height:10px;border-radius:50%;background:#5ec25b"></div>
<div class="a" style="left:-170px;top:0;width:0;height:24px"><svg class="a" style="left:216px;top:0px" width="15" height="24" viewBox="0 0 15 24"><path d="M7.5 0.6C3.6 0.6 0.8 3.4 0.8 7C0.8 9.6 2.4 11.3 3.8 12.8C4.6 13.7 4.8 14.6 4.8 16H10.2C10.2 14.6 10.4 13.7 11.2 12.8C12.6 11.3 14.2 9.6 14.2 7C14.2 3.4 11.4 0.6 7.5 0.6Z" fill="#f3f3f3" stroke="#c9c9c9" stroke-width="0.9"/><path d="M5.5 11Q7.5 8 9.5 11" stroke="#bdbdbd" stroke-width="0.7" fill="none"/><rect x="4.8" y="16" width="5.4" height="5" fill="#4a4a4a"/><path d="M4.8 17.5H10.2M4.8 19.2H10.2" stroke="#888" stroke-width="0.6"/><path d="M5.8 21H9.2L8.3 23H6.7Z" fill="#2a2a2a"/></svg></div>
<div class="a" style="left:79px;top:1px;letter-spacing:0.15px">Light Living Room</div>
<div class="a" style="left:338px;top:1px;letter-spacing:-0.1px">192.168.178.44</div>
<div class="a" style="left:465px;top:1px;width:156px;overflow:hidden;letter-spacing:0.25px">Dexatek Technology Ltd</div>
<div class="a" style="left:636px;top:1px">7 ms</div>
<div class="a" style="left:718px;top:1px;width:111px;overflow:hidden;letter-spacing:0.2px">http</div>
</div>
<div class="a" style="left:0;top:402px;width:829px;height:24px;background:#f4f4f4;color:#222;font-size:13px;line-height:24px;">
<div class="a" style="left:15px;top:7px;width:10px;height:10px;border-radius:50%;background:#5ec25b"></div>
<div class="a" style="left:-170px;top:0;width:0;height:24px"><div class="a" style="left:217.5px;top:5px;width:12px;height:14.5px;background:linear-gradient(90deg,#c8c8c8,#e8e8e8,#c4c4c4);border-radius:4px"></div></div>
<div class="a" style="left:79px;top:1px;letter-spacing:0.15px">HomePod</div>
<div class="a" style="left:338px;top:1px;letter-spacing:-0.1px">192.168.178.44</div>
<div class="a" style="left:465px;top:1px;width:156px;overflow:hidden;letter-spacing:0.25px">Apple</div>
<div class="a" style="left:636px;top:1px">11 ms</div>
<div class="a" style="left:718px;top:1px;width:111px;overflow:hidden;letter-spacing:0.2px"></div>
</div>
<div class="a" style="left:0;top:426px;width:829px;height:24px;background:#fff;color:#222;font-size:13px;line-height:24px;">
<div class="a" style="left:15px;top:7px;width:10px;height:10px;border-radius:50%;background:#f4b844"></div>
<div class="a" style="left:-170px;top:0;width:0;height:24px"><div class="a" style="left:215.5px;top:7.5px;width:15.5px;height:8px;background:#141414"></div></div>
<div class="a" style="left:79px;top:1px;letter-spacing:0.15px">Kamera</div>
<div class="a" style="left:338px;top:1px;letter-spacing:-0.1px">192.168.178.45</div>
<div class="a" style="left:465px;top:1px;width:156px;overflow:hidden;letter-spacing:0.25px">Apple</div>
<div class="a" style="left:636px;top:1px">k.A.</div>
<div class="a" style="left:718px;top:1px;width:111px;overflow:hidden;letter-spacing:0.2px"></div>
</div>
<div class="a" style="left:0;top:450px;width:829px;height:24px;background:#f4f4f4;color:#222;font-size:13px;line-height:24px;">
<div class="a" style="left:15px;top:7px;width:10px;height:10px;border-radius:50%;background:#f4b844"></div>
<div class="a" style="left:-170px;top:0;width:0;height:24px"><div class="a" style="left:215.5px;top:4.5px;width:15px;height:15px;background:linear-gradient(#f4f4f4,#dcdcdc);border:1px solid #e0e0e0;border-radius:2px"></div></div>
<div class="a" style="left:79px;top:1px;letter-spacing:0.15px">Scanner</div>
<div class="a" style="left:338px;top:1px;letter-spacing:-0.1px">192.168.178.47</div>
<div class="a" style="left:465px;top:1px;width:156px;overflow:hidden;letter-spacing:0.25px">HP Inc.</div>
<div class="a" style="left:636px;top:1px">k.A.</div>
<div class="a" style="left:718px;top:1px;width:111px;overflow:hidden;letter-spacing:0.2px"></div>
</div>
<div class="a" style="left:0;top:0;width:829px;height:27px;background:#fafafa;border-bottom:1px solid #e0e0e0;font-size:11.4px;line-height:29px;color:#4a4a4a">
<div class="a" style="left:36px;top:7px;width:1px;height:15px;background:#e2e2e2"></div>
<div class="a" style="left:70px;top:7px;width:1px;height:15px;background:#e2e2e2"></div>
<div class="a" style="left:328px;top:7px;width:1px;height:15px;background:#e2e2e2"></div>
<div class="a" style="left:456px;top:7px;width:1px;height:15px;background:#e2e2e2"></div>
<div class="a" style="left:627px;top:7px;width:1px;height:15px;background:#e2e2e2"></div>
<div class="a" style="left:708px;top:7px;width:1px;height:15px;background:#e2e2e2"></div>
<div class="a" style="left:81px;top:0">Name</div>
<div class="a" style="left:339px;top:0;font-weight:bold;color:#2a2a2a;font-size:11.5px">IP-Adresse</div>
<svg class="a" style="left:440px;top:10px" width="9" height="6" viewBox="0 0 9 6"><path d="M1 5L4.5 1.5L8 5" fill="none" stroke="#777" stroke-width="1.1"/></svg>
<div class="a" style="left:466px;top:0">Hersteller</div>
<div class="a" style="left:637px;top:0">Antwort</div>
<div class="a" style="left:719px;top:0">Dienste</div>
</div>
</div>
<div class="a" style="left:999px;top:53px;width:1px;height:747px;background:#dcdcdc"></div>
<div class="a" style="left:1000px;top:52px;width:139px;height:27px;background:#2b7cf0;color:#fff;font-weight:bold;font-size:13px;line-height:27px;text-align:center">Host</div>
<div class="a" style="left:1139px;top:52px;width:141px;height:27px;background:#ebebeb;color:#7a7a7a;font-size:13px;line-height:27px;text-align:center">Scan</div>
<div class="a" style="left:1020px;top:85.0px;line-height:24px;font-weight:bold;color:#222">IP</div>
<div class="a" style="left:1041.5px;top:85.0px;line-height:24px;color:#262626;letter-spacing:0">192.168.178.41</div>
<div class="a" style="left:1020px;top:109.0px;line-height:24px;font-weight:bold;color:#222">IPv6</div>
<div class="a" style="left:1057px;top:109.0px;line-height:24px;color:#262626;letter-spacing:0.05px">FE80::14B7:6110:169F:4D53,</div>
<div class="a" style="left:1057px;top:125.0px;line-height:24px;color:#262626;letter-spacing:0.05px">FE80::1, ::1</div>
<div class="a" style="left:1020px;top:149.0px;line-height:24px;font-weight:bold;color:#222">MAC</div>
<div class="a" style="left:1058.5px;top:149.0px;line-height:24px;color:#262626;letter-spacing:0.15px">88:E9:FE:87:B3:06</div>
<div class="a" style="left:1020px;top:173.0px;line-height:24px;font-weight:bold;color:#222">Antwortzeit</div>
<div class="a" style="left:1103px;top:173.0px;line-height:24px;color:#262626;letter-spacing:0.3px">3 ms</div>
<div class="a" style="left:1020px;top:197.0px;line-height:24px;font-weight:bold;color:#222">Status</div>
<div class="a" style="left:1093px;top:197.0px;line-height:24px;color:#262626;letter-spacing:0.3px">online</div>
<div class="a" style="left:1020px;top:221.5px;line-height:24px;font-weight:bold;color:#222">DNS</div>
<div class="a" style="left:1057px;top:221.5px;line-height:24px;color:#262626;letter-spacing:0.3px">danielscbookpro.fritz.box</div>
<div class="a" style="left:1020px;top:246.0px;line-height:24px;font-weight:bold;color:#222">mDNS</div>
<div class="a" style="left:1068.5px;top:246.0px;line-height:24px;color:#262626;letter-spacing:0.3px">Daniels-Mac-Book-Pro.local</div>
<div class="a" style="left:1020px;top:270.0px;line-height:24px;font-weight:bold;color:#222">Model-ID</div>
<div class="a" style="left:1087px;top:270.0px;line-height:24px;color:#262626;letter-spacing:0">MacBookPro15,1</div>
<div class="a" style="left:1020px;top:294.0px;line-height:24px;font-weight:bold;color:#222">Hersteller</div>
<div class="a" style="left:1091px;top:294.0px;line-height:24px;color:#262626;letter-spacing:0.3px">Apple</div>
<div class="a" style="left:1020px;top:318.0px;line-height:24px;font-weight:bold;color:#222">Typ</div>
<div class="a" style="left:1052px;top:318.0px;line-height:24px;color:#262626;letter-spacing:0.3px">Host hat Scan gestartet</div>
<div class="a" style="left:1020px;top:342.0px;line-height:24px;font-weight:bold;color:#222">Letzte Aktualisierung</div>
<div class="a" style="left:1163px;top:342.0px;line-height:24px;color:#262626;letter-spacing:0">05.11.20, 19:38</div>
<div class="a" style="left:1020px;top:366.0px;line-height:24px;font-weight:bold;color:#222">Letzte Aktivität</div>
<div class="a" style="left:1125px;top:366.0px;line-height:24px;color:#262626;letter-spacing:0">05.11.20, 19:40</div>
<div class="a" style="left:1020px;top:390.0px;line-height:24px;font-weight:bold;color:#222">Erste Aktivität</div>
<div class="a" style="left:1118px;top:390.0px;line-height:24px;color:#262626;letter-spacing:0">10.11.19, 20:03</div>
<div class="a" style="left:1020px;top:414.0px;line-height:24px;font-weight:bold;color:#222">Dienste</div>
<div class="a" style="left:1076.5px;top:414.0px;line-height:24px;color:#222"><span style="color:#2f64b5;text-decoration:underline;text-decoration-color:#7d9fd6;letter-spacing:0.3px">eppc</span>, <span style="color:#2f64b5;text-decoration:underline;text-decoration-color:#7d9fd6;letter-spacing:0.3px">kerberos</span>, <span style="color:#2f64b5;text-decoration:underline;text-decoration-color:#7d9fd6;letter-spacing:0.3px">smb</span>, <span style="color:#2f64b5;text-decoration:underline;text-decoration-color:#7d9fd6;letter-spacing:0.3px">ssh</span>, <span style="color:#2f64b5;text-decoration:underline;text-decoration-color:#7d9fd6;letter-spacing:0.3px">vnc</span></div>
<div class="a" style="left:1072px;top:204px;width:10px;height:10px;border-radius:50%;background:#5ec25b"></div>
<div class="a" style="left:1136px;top:201.5px;width:15px;height:15px;border-radius:50%;background:#fff;box-shadow:0 0 0 0.5px #e4e4e4,0 0.5px 1.5px rgba(0,0,0,0.12);font-size:10px;font-weight:bold;line-height:15px;text-align:center;color:#555">?</div>
<svg class="a" style="left:1194px;top:276px" width="13" height="13" viewBox="0 0 13 13"><circle cx="6.5" cy="6.5" r="6.3" fill="#a9a9a9"/><path d="M3 6.5H9M6.5 3.8L9.2 6.5L6.5 9.2" fill="none" stroke="#fff" stroke-width="1.5"/></svg>
<div class="a" style="left:1000px;top:443px;width:280px;height:1px;background:#e4e4e4"></div>
<div class="a" style="left:1000px;top:530px;width:280px;height:1px;background:#e4e4e4"></div>
<div class="a" style="left:1020.5px;top:448.5px;line-height:24px;font-weight:bold;color:#222">Anmerkungen</div>
<svg class="a" style="left:1118px;top:457px" width="10" height="7" viewBox="0 0 10 7"><path d="M1.2 1.5L5 5.3L8.8 1.5" fill="none" stroke="#9a9a9a" stroke-width="1.1"/></svg>
<div class="a" style="left:1020px;top:476px;width:239px;height:43px;background:#fff;border:1px solid #eeeeee;border-bottom:1px solid #d6d6d6"></div>
<div class="a" style="left:1024px;top:480px;line-height:16px;font-size:12px;color:#222">:)</div>
<div class="a" style="left:1020.5px;top:536px;line-height:24px;font-weight:bold;color:#222">Log</div>
<svg class="a" style="left:1052px;top:544px" width="10" height="7" viewBox="0 0 10 7"><path d="M1.2 1.5L5 5.3L8.8 1.5" fill="none" stroke="#9a9a9a" stroke-width="1.1"/></svg>
<div class="a" style="left:1020px;top:563px;width:240px;height:227px;background:#fff;border:1px solid #ececec;overflow:hidden">
<div class="a" style="left:0;top:0px;width:238px;height:53px;border-bottom:1px solid #ededed">
<div class="a" style="left:9.5px;top:2.5px;font-size:11.6px;line-height:16px;font-weight:bold;color:#222">05.11.20, 19:05</div>
<div class="a" style="left:9.5px;top:21px;font-size:11.6px;line-height:14px;color:#4a4a4a">Entfernt: IPv6:<br>FE80::1.</div>
</div>
<div class="a" style="left:0;top:53px;width:238px;height:53px;border-bottom:1px solid #ededed">
<div class="a" style="left:9.5px;top:2.5px;font-size:11.6px;line-height:16px;font-weight:bold;color:#222">05.11.20, 19:05</div>
<div class="a" style="left:9.5px;top:21px;font-size:11.6px;line-height:14px;color:#4a4a4a">Entfernt: IPv6:<br>::1.</div>
</div>
<div class="a" style="left:0;top:106px;width:238px;height:53px;border-bottom:1px solid #ededed">
<div class="a" style="left:9.5px;top:2.5px;font-size:11.6px;line-height:16px;font-weight:bold;color:#222">05.11.20, 19:01</div>
<div class="a" style="left:9.5px;top:21px;font-size:11.6px;line-height:14px;color:#4a4a4a">Neuer Port:<br>3031.</div>
</div>
<div class="a" style="left:0;top:159px;width:238px;height:53px;border-bottom:1px solid #ededed">
<div class="a" style="left:9.5px;top:2.5px;font-size:11.6px;line-height:16px;font-weight:bold;color:#222">05.11.20, 18:52</div>
<div class="a" style="left:9.5px;top:21px;font-size:11.6px;line-height:14px;color:#4a4a4a">Neuer Port:<br>445.</div>
</div>
<div class="a" style="left:0;top:212px;width:238px;height:53px;border-bottom:1px solid #ededed">
<div class="a" style="left:9.5px;top:2.5px;font-size:11.6px;line-height:16px;font-weight:bold;color:#222">05.11.20, 18:52</div>
<div class="a" style="left:9.5px;top:21px;font-size:11.6px;line-height:14px;color:#4a4a4a">Neuer Port:<br>22.</div>
</div>
</div>
</body></html>
